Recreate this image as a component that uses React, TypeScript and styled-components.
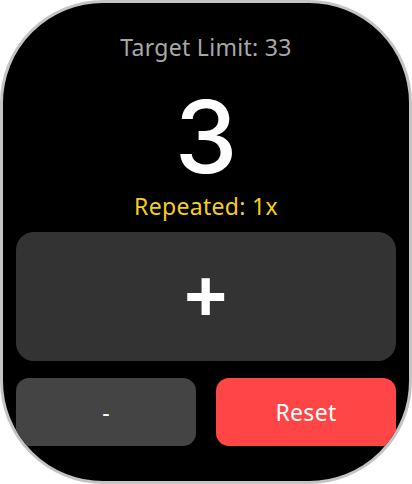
import React, { useState } from "react";
import styled, { createGlobalStyle } from "styled-components";

const GlobalStyle = createGlobalStyle`
  html, body {
    margin: 0;
    padding: 0;
    background: #ffffff;
  }
  body {
    font-family: "Noto Sans", Inter, sans-serif;
  }
`;

const Screen = styled.div`
  box-sizing: border-box;
  width: 412px;
  height: 484px;
  background: #000;
  border: 3px solid #c4c4c4;
  border-radius: 103px;
  overflow: hidden;
  display: flex;
  flex-direction: column;
  align-items: stretch;
  padding: 30px 13px 0;
`;

const Header = styled.div`
  display: flex;
  flex-direction: column;
  align-items: center;
`;

const Limit = styled.div`
  color: #a8a8a8;
  font-size: 23px;
  letter-spacing: 0.3px;
  line-height: 28px;
`;

const Count = styled.div`
  color: #fff;
  font-family: Inter, "Noto Sans", sans-serif;
  font-size: 100px;
  font-weight: 500;
  line-height: 80px;
  margin-top: 36px;
`;

const Repeated = styled.div`
  color: #f5cf1c;
  font-size: 23px;
  letter-spacing: 0.3px;
  line-height: 26px;
  margin-top: 16px;
`;

const Button = styled.button<{ $bg: string; $h: number; $size: number; $weight?: number }>`
  border: none;
  margin: 0;
  padding: 0;
  font-family: inherit;
  color: #fff;
  background: ${(p) => p.$bg};
  height: ${(p) => p.$h}px;
  font-size: ${(p) => p.$size}px;
  font-weight: ${(p) => p.$weight ?? 400};
  letter-spacing: 0.3px;
  border-radius: ${(p) => (p.$h > 100 ? 18 : 13)}px;
  display: flex;
  align-items: center;
  justify-content: center;
  cursor: pointer;
`;

const PlusButton = styled(Button)`
  margin-top: 13px;
  padding-bottom: 6px;
`;

const Row = styled.div`
  display: grid;
  grid-template-columns: 1fr 1fr;
  gap: 20px;
  margin-top: 17px;
`;

export default function App() {
  const limit = 33;
  const [count, setCount] = useState(3);
  const [rounds, setRounds] = useState(1);

  const inc = () => {
    if (count + 1 >= limit) {
      setCount(0);
      setRounds((r) => r + 1);
    } else setCount(count + 1);
  };

  return (
    <>
      <GlobalStyle />
      <Screen>
        <Header>
          <Limit>Target Limit: {limit}</Limit>
          <Count>{count}</Count>
          <Repeated>Repeated: {rounds}x</Repeated>
        </Header>
        <PlusButton $bg="#333333" $h={129} $size={76} $weight={700} onClick={inc}>
          +
        </PlusButton>
        <Row>
          <Button $bg="#444444" $h={68} $size={23} onClick={() => setCount((c) => Math.max(0, c - 1))}>
            -
          </Button>
          <Button
            $bg="#ff4545"
            $h={68}
            $size={23}
            onClick={() => {
              setCount(0);
              setRounds(0);
            }}
          >
            Reset
          </Button>
        </Row>
      </Screen>
    </>
  );
}
